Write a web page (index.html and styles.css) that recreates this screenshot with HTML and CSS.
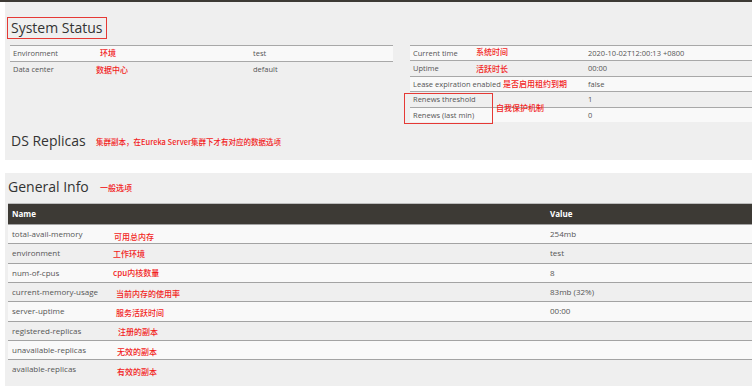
FILE: index.html
```html
<!DOCTYPE HTML>
<html>
<head>
<meta http-equiv="Content-Type" content="text/html; charset=utf-8">
<title>Eureka</title>
<link rel="stylesheet" href="styles.css">
</head>
<body>
	<div class="topbar"></div>

	<div class="panel status">
		<h2 class="title boxed">System Status</h2>
		<div class="cols">
			<table class="info left">
				<tr><td class="k">Environment</td><td>test</td></tr>
				<tr><td class="k">Data center</td><td>default</td></tr>
			</table>
			<table class="info right">
				<tr><td class="k">Current time</td><td>2020-10-02T12:00:13 +0800</td></tr>
				<tr><td class="k">Uptime</td><td>00:00</td></tr>
				<tr><td class="k">Lease expiration enabled</td><td>false</td></tr>
				<tr><td class="k">Renews threshold</td><td>1</td></tr>
				<tr><td class="k">Renews (last min)</td><td>0</td></tr>
			</table>
		</div>
		<h2 class="title ds">DS Replicas</h2>
	</div>

	<div class="panel general">
		<h2 class="title">General Info</h2>
		<table class="grid">
			<tr class="head"><th class="k">Name</th><th>Value</th></tr>
			<tr><td class="k">total-avail-memory</td><td>254mb</td></tr>
			<tr><td class="k">environment</td><td>test</td></tr>
			<tr><td class="k">num-of-cpus</td><td>8</td></tr>
			<tr><td class="k">current-memory-usage</td><td>83mb (32%)</td></tr>
			<tr><td class="k">server-uptime</td><td>00:00</td></tr>
			<tr><td class="k">registered-replicas</td><td></td></tr>
			<tr><td class="k">unavailable-replicas</td><td></td></tr>
			<tr><td class="k">available-replicas</td><td></td></tr>
		</table>
	</div>

	<!-- 红色批注 -->
	<div class="notes">
		<span class="note n1">环境</span>
		<span class="note n2">数据中心</span>
		<span class="note n3">系统时间</span>
		<span class="note n4">活跃时长</span>
		<span class="note n5">是否启用租约到期</span>
		<span class="redbox"></span>
		<span class="note n6">自我保护机制</span>
		<span class="note n7 small">集群副本，在Eureka Server集群下才有对应的数据选项</span>
		<span class="note n8">一般选项</span>
		<span class="note n9">可用总内存</span>
		<span class="note n10">工作环境</span>
		<span class="note n11">cpu内核数量</span>
		<span class="note n12">当前内存的使用率</span>
		<span class="note n13">服务活跃时间</span>
		<span class="note n14">注册的副本</span>
		<span class="note n15">无效的副本</span>
		<span class="note n16">有效的副本</span>
	</div>
</body>
</html>
```

FILE: styles.css
```css
body {
	margin: 0;
	background: #fff;
	font-family: "Open Sans", "Noto Sans CJK SC", sans-serif;
	color: #555;
	position: relative;
	height: 386px;
	overflow: hidden;
}

.topbar {
	height: 2px;
	background: #3d3a35;
}

.panel {
	margin-left: 5px;
	background: #efefef;
}

.title {
	margin: 0;
	font-family: "Open Sans", sans-serif;
	font-weight: 500;
	font-size: 14px;
	line-height: 20px;
	color: #333;
}

/* System Status 外面的红框 */
.boxed {
	display: inline-block;
	vertical-align: top;
	margin-left: 2px;
	padding: 0 3px;
	border: 1px solid #e53935;
}

.status {
	padding: 15px 0 9px 0;
}

.cols {
	display: grid;
	grid-template-columns: 383px 1fr;
	column-gap: 17px;
	align-items: start;
	margin: 6px 0 0 5px;
}

table {
	border-collapse: collapse;
	width: 100%;
}

.info td {
	font-size: 7.5px;
	line-height: 14.4px;
	padding: 0 0 0 3px;
	border-top: 1px solid #a8a8a8;
	white-space: nowrap;
}

.info tr:nth-child(odd) td {
	background: #f9f9f9;
}

.left td { line-height: 15px; }
.left .k { width: 237px; }
.right .k { width: 172px; }

.ds {
	margin: 9px 0 0 6px;
}

.general {
	margin-top: 13px;
	padding: 4px 0 8px 3px;
}

.general .title {
	margin-bottom: 6px;
}

.grid th {
	background: #3d3a35;
	color: #fff;
	font-size: 8px;
	font-weight: bold;
	text-align: left;
	line-height: 20px;
	padding: 0 0 0 4px;
	border-top: 1px solid #bdbdbd;
}

.grid td {
	font-size: 8px;
	line-height: 18.3px;
	padding: 0 0 0 4px;
	border-top: 1px solid #a3a3a3;
}

.grid tr:nth-child(even) td {
	background: #f9f9f9;
}

.grid .k { width: 534px; }

/* 批注层 */
.notes {
	position: absolute;
	left: 0;
	top: 0;
}

.note {
	position: absolute;
	font-family: "Noto Sans CJK SC", sans-serif;
	font-weight: 500;
	font-size: 8px;
	line-height: 10px;
	color: #f21d1d;
	white-space: nowrap;
}

.note.small { font-size: 7.5px; }

.redbox {
	position: absolute;
	left: 404px;
	top: 93px;
	width: 87px;
	height: 29px;
	border: 1px solid #e53935;
}

.n1 { left: 100px; top: 48px; }
.n2 { left: 96px; top: 65px; }
.n3 { left: 476px; top: 47px; }
.n4 { left: 476px; top: 64px; }
.n5 { left: 503px; top: 79px; }
.n6 { left: 496px; top: 103px; }
.n7 { left: 96px; top: 137px; }
.n8 { left: 100px; top: 183px; }
.n9 { left: 114px; top: 232px; }
.n10 { left: 113px; top: 249px; }
.n11 { left: 113px; top: 268px; }
.n12 { left: 116px; top: 289px; }
.n13 { left: 116px; top: 308px; }
.n14 { left: 118px; top: 327px; }
.n15 { left: 117px; top: 347px; }
.n16 { left: 117px; top: 367px; }
```
